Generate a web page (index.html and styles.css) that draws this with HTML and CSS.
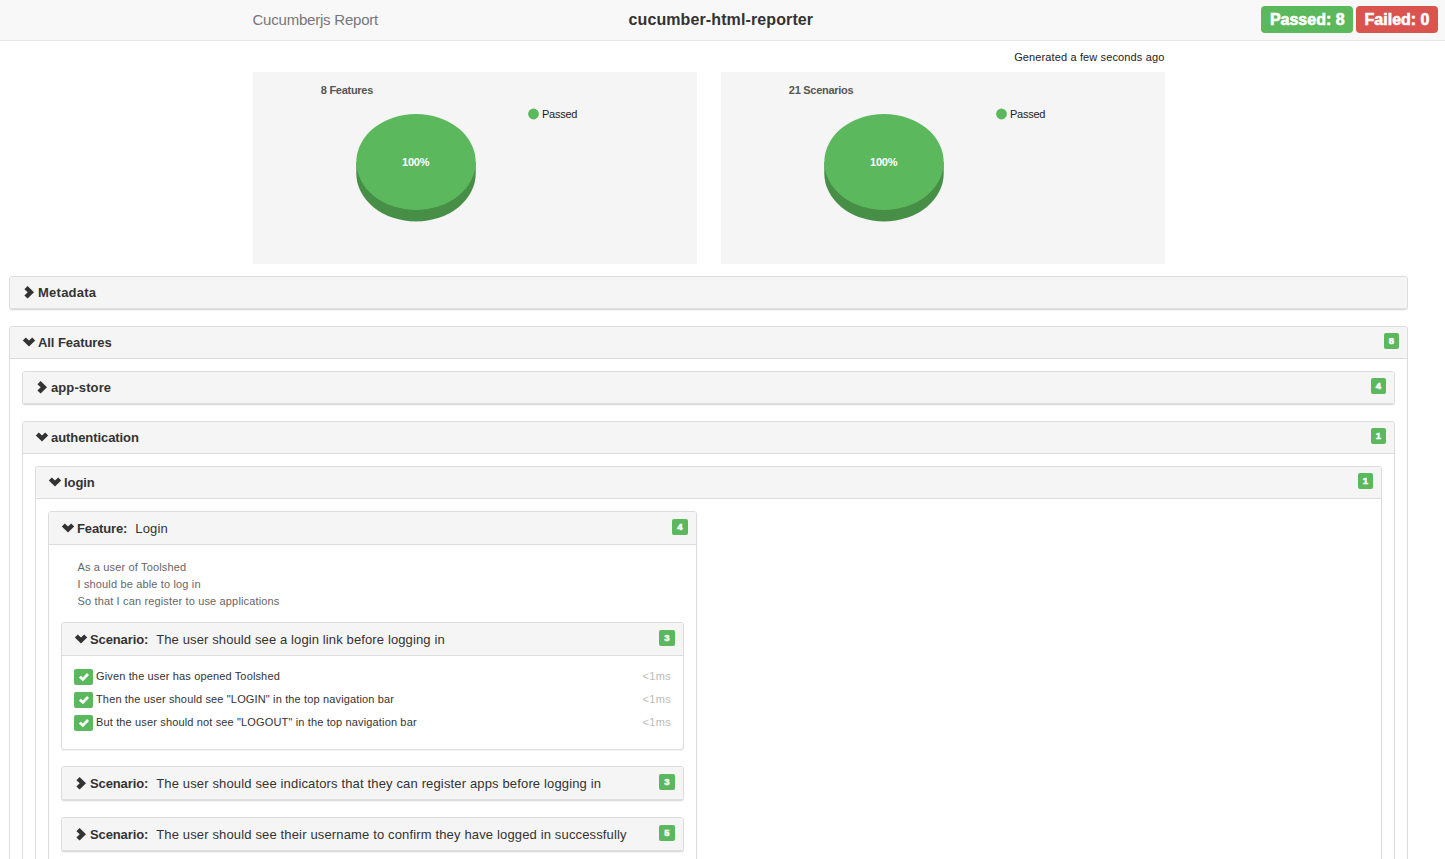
FILE: index.html
```html
<!DOCTYPE html>
<html lang="en">
<head>
<meta charset="utf-8">
<title>Cucumberjs Report</title>
<link rel="stylesheet" href="styles.css">
</head>
<body>
<svg class="defs" width="0" height="0">
  <symbol id="right" viewBox="0 0 12 13"><path d="M1.4 3.3 4.6.1 11 6.3 4.6 12.5 1.4 9.4 4.7 6.3z"/></symbol>
  <symbol id="down" viewBox="0 0 12 13"><path d="M-.2 4.5 2.8 1.5 6 4.6 9.2 1.5 12.2 4.5 6 10.4z"/></symbol>
  <symbol id="check" viewBox="0 0 10 10"><path d="M-.1 5.7 1.9 3.7 3.8 5.4 8 1 10 2.9 3.9 9.3z"/></symbol>
</svg>
<nav class="navbar">
  <div class="brand">Cucumberjs Report</div>
  <div class="project">cucumber-html-reporter</div>
  <div class="totals"><span class="total passed">Passed: 8</span><span class="total failed">Failed: 0</span></div>
</nav>
<div class="summary">
  <div class="generated"><span>Generated a few seconds ago</span></div>
  <div class="charts">
    <svg class="chart" width="444" height="192" viewBox="0 0 444 192">
      <path class="side" d="M103.3 90v11.5a59.7 48 0 0 0 119.4 0v-11.5z"/>
      <ellipse class="top" cx="163" cy="90" rx="59.7" ry="48"/>
      <text class="chart-title" x="67.8" y="22">8 Features</text>
      <text class="chart-value" x="162.7" y="94">100%</text>
      <circle class="top" cx="280.5" cy="42" r="5.4"/>
      <text class="legend" x="289" y="46">Passed</text>
    </svg>
    <svg class="chart" width="444" height="192" viewBox="0 0 444 192">
      <path class="side" d="M103.3 90v11.5a59.7 48 0 0 0 119.4 0v-11.5z"/>
      <ellipse class="top" cx="163" cy="90" rx="59.7" ry="48"/>
      <text class="chart-title" x="67.8" y="22">21 Scenarios</text>
      <text class="chart-value" x="162.7" y="94">100%</text>
      <circle class="top" cx="280.5" cy="42" r="5.4"/>
      <text class="legend" x="289" y="46">Passed</text>
    </svg>
  </div>
</div>
<main class="report">
  <section class="panel">
    <header class="heading"><svg class="icon"><use href="#right"/></svg><b class="wide">Metadata</b></header>
  </section>
  <section class="panel">
    <header class="heading"><svg class="icon"><use href="#down"/></svg><b>All Features</b><span class="count">8</span></header>
    <div class="body">
      <section class="panel">
        <header class="heading"><svg class="icon"><use href="#right"/></svg><b class="medium">app-store</b><span class="count">4</span></header>
      </section>
      <section class="panel">
        <header class="heading"><svg class="icon"><use href="#down"/></svg><b>authentication</b><span class="count">1</span></header>
        <div class="body">
          <section class="panel">
            <header class="heading"><svg class="icon"><use href="#down"/></svg><b>login</b><span class="count">1</span></header>
            <div class="body">
              <section class="panel feature">
                <header class="heading tall"><svg class="icon"><use href="#down"/></svg><b>Feature:</b><span class="name">Login</span><span class="count">4</span></header>
                <div class="body">
                  <p class="description">As a user of Toolshed<br>I should be able to log in<br>So that I can register to use applications</p>
                  <section class="panel">
                    <header class="heading tall"><svg class="icon"><use href="#down"/></svg><b>Scenario:</b><span class="name snug">The user should see a login link before logging in</span><span class="count">3</span></header>
                    <div class="body steps">
                      <div class="step"><span class="ok"><svg><use href="#check"/></svg></span><span class="text">Given the user has opened Toolshed</span><span class="time">&lt;1ms</span></div>
                      <div class="step"><span class="ok"><svg><use href="#check"/></svg></span><span class="text">Then the user should see "LOGIN" in the top navigation bar</span><span class="time">&lt;1ms</span></div>
                      <div class="step"><span class="ok"><svg><use href="#check"/></svg></span><span class="text">But the user should not see "LOGOUT" in the top navigation bar</span><span class="time">&lt;1ms</span></div>
                    </div>
                  </section>
                  <section class="panel">
                    <header class="heading tall"><svg class="icon"><use href="#right"/></svg><b>Scenario:</b><span class="name">The user should see indicators that they can register apps before logging in</span><span class="count">3</span></header>
                  </section>
                  <section class="panel">
                    <header class="heading tall"><svg class="icon"><use href="#right"/></svg><b>Scenario:</b><span class="name">The user should see their username to confirm they have logged in successfully</span><span class="count">5</span></header>
                  </section>
                </div>
              </section>
            </div>
          </section>
        </div>
      </section>
    </div>
  </section>
</main>
</body>
</html>
```
FILE: styles.css
```css
* { box-sizing: border-box; }
html, body { height: 100%; }
body {
  margin: 0;
  overflow: hidden;
  background: #fff;
  color: #333;
  font: 13px/18px "Liberation Sans", Arial, sans-serif;
}
.defs { display: block; }
.navbar {
  display: grid;
  grid-template-columns: 376px 1fr auto;
  height: 41px;
  padding: 0 7px 0 252.5px;
  background: #f8f8f8;
  border-bottom: 1px solid #e7e7e7;
  line-height: 39px;
}
.brand { font-size: 15px; letter-spacing: -.22px; color: #777; }
.project { font-size: 16px; font-weight: bold; letter-spacing: .11px; }
.totals { display: flex; gap: 3px; padding-top: 6px; }
.total {
  height: 27px;
  padding: 0 8.5px;
  border-radius: 4px;
  color: #fff;
  font-size: 16px;
  font-weight: bold;
  line-height: 27px;
  -webkit-text-stroke: .6px #fff;
}
.passed { background: #5cb85c; }
.failed { background: #d9534f; }
.summary { width: 912px; margin-left: 253px; }
.generated { height: 31px; padding: 7px .6px 0 0; text-align: right; font-size: 11px; letter-spacing: .13px; color: #222; }
.charts { display: flex; justify-content: space-between; }
.chart { display: block; background: #f5f5f5; }
.side { fill: #478e47; }
.top { fill: #5cb85c; }
.chart-title { font-size: 11px; font-weight: bold; letter-spacing: -.28px; fill: #555; }
.chart-value { font-size: 11px; font-weight: bold; letter-spacing: -.2px; fill: #fff; text-anchor: middle; }
.legend { font-size: 11px; letter-spacing: -.25px; fill: #222; }
.report { width: 1399px; margin: 12px 0 0 9px; }
.panel {
  border: 1px solid #ddd;
  border-radius: 3px;
  background: #fff;
  box-shadow: 0 1px 1px rgba(0, 0, 0, .05);
}
.panel + .panel { margin-top: 16px; }
.heading {
  display: flex;
  align-items: center;
  height: 32px;
  padding: 0 8px 0 13px;
  border-bottom: 1px solid #ddd;
  border-radius: 2px 2px 0 0;
  background: #f5f5f5;
}
.heading b { letter-spacing: -.07px; }
.heading .wide { letter-spacing: .25px; }
.heading .medium { letter-spacing: .1px; }
.heading.tall { height: 33px; padding-top: 1px; }
.heading.tall b { letter-spacing: -.12px; }
.icon { width: 12px; height: 13px; margin-right: 3px; fill: #333; overflow: visible; }
symbol { overflow: visible; }
.name { margin-left: 8px; letter-spacing: .15px; white-space: nowrap; }
.name.snug { letter-spacing: .12px; }
.count {
  width: 15px;
  height: 16px;
  margin: -3px 0 0 auto;
  border-radius: 2px;
  background: #5cb85c;
  color: #fff;
  font-size: 9.5px;
  font-weight: bold;
  line-height: 15px;
  text-align: center;
  -webkit-text-stroke: .5px #fff;
}
.tall .count { width: 16px; }
.body { padding: 12px; }
.feature { width: 649px; }
.description { margin: 2px 0 12px 16.5px; color: #666; font-size: 11px; line-height: 17px; letter-spacing: .15px; }
.steps { height: 93px; }
.step { display: flex; align-items: center; height: 17px; margin-bottom: 6px; font-size: 11px; letter-spacing: .145px; }
.text, .time { margin-top: -1px; line-height: 16px; }
.ok {
  display: flex;
  align-items: center;
  justify-content: center;
  width: 19px;
  height: 16px;
  margin: 1px 3px 0 0;
  border-radius: 2px;
  background: #5cb85c;
}
.ok svg { width: 10px; height: 10px; fill: #fff; }
.time { margin-left: auto; color: #bbb; letter-spacing: .3px; }
```
